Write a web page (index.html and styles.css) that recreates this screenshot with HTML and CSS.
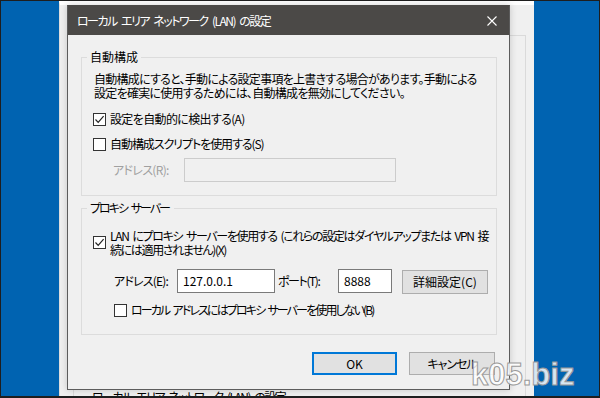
FILE: index.html
```html
<!DOCTYPE html>
<html lang="ja">
<head>
  <meta charset="UTF-8" />
  <meta name="viewport" content="width=device-width, initial-scale=1.0" />
  <title>ローカル エリア ネットワーク (LAN) の設定</title>
  <link rel="stylesheet" href="styles.css">
</head>
<body>
  <div class="screen">
    <div class="backwin">
      <div class="backwin-panel">
        <div class="backwin-caption">ローカル エリア ネットワーク (LAN) の設定</div>
      </div>
    </div>

    <div class="dialog">
      <div class="titlebar">
        <span class="title">ローカル エリア ネットワーク (LAN) の設定</span>
        <svg class="close" width="10" height="10" viewBox="0 0 10 10"><path d="M0.5 0.5L9.5 9.5M9.5 0.5L0.5 9.5" stroke="#fff" stroke-width="1.1" fill="none"/></svg>
      </div>
      <div class="dialog-body">
        <fieldset class="group group-auto">
          <legend>自動構成</legend>
          <div class="group-body">
            <p class="desc">自動構成にすると、手動による設定事項を上書きする場合があります。手動による<br>設定を確実に使用するためには、自動構成を無効にしてください。</p>
            <div class="check row-detect"><span class="box"><svg width="11" height="11" viewBox="0 0 11 11"><path d="M1.5 5.5L4.2 8.3L9.6 2.2" stroke="#222" stroke-width="1.2" fill="none"/></svg></span><span>設定を自動的に検出する(A)</span></div>
            <div class="check row-script"><span class="box"></span><span>自動構成スクリプトを使用する(S)</span></div>
            <div class="field-row row-script-addr disabled">
              <span class="field-label label-r">アドレス(R):</span>
              <span class="input input-script"></span>
            </div>
          </div>
        </fieldset>

        <fieldset class="group group-proxy">
          <legend>プロキシ サーバー</legend>
          <div class="group-body">
            <div class="check check-multi row-use-proxy"><span class="box"><svg width="11" height="11" viewBox="0 0 11 11"><path d="M1.5 5.5L4.2 8.3L9.6 2.2" stroke="#222" stroke-width="1.2" fill="none"/></svg></span><span>LAN にプロキシ サーバーを使用する (これらの設定はダイヤルアップまたは VPN 接<br>続には適用されません)(X)</span></div>
            <div class="field-row row-proxy-addr">
              <span class="field-label label-e">アドレス(E):</span>
              <span class="input input-addr">127.0.0.1</span>
              <span class="field-label label-t">ポート(T):</span>
              <span class="input input-port">8888</span>
              <button class="btn btn-advanced">詳細設定(C)</button>
            </div>
            <div class="check row-bypass"><span class="box"></span><span>ローカル アドレスにはプロキシ サーバーを使用しない(B)</span></div>
          </div>
        </fieldset>

        <div class="button-row">
          <button class="btn btn-ok">OK</button>
          <button class="btn btn-cancel">キャンセル</button>
        </div>
      </div>
    </div>

    <div class="watermark">k05.biz</div>
  </div>
</body>
</html>
```

FILE: styles.css
```css
* { box-sizing: border-box; }
body { margin: 0; background: #1e1e1e; font-family: "Noto Sans CJK JP", "Noto Sans", sans-serif; font-size: 12px; color: #000; font-feature-settings: "palt"; }
.screen { position: relative; width: 600px; height: 398px; border: 1px solid #1e1e1e; border-bottom-width: 2px; background: #0063b1; overflow: hidden; }

/* window behind the dialog */
.backwin { position: absolute; left: 58px; top: 0; width: 475px; height: 395px; background: #f0f0f0; border-top: 4px solid #fff; border-left: 1px solid #dcdcdc; padding: 30px 8px 0 13px; }
.backwin-panel { height: 100%; border: 1px solid #dadada; border-bottom: none; padding-left: 18px; }
.backwin-caption { margin-top: 353px; line-height: 16px; white-space: nowrap; letter-spacing: -1.5px; word-spacing: 3px; }

/* dialog */
.dialog { position: absolute; left: 66px; top: 4px; width: 443px; height: 385px; background: #f0f0f0; border: 1px solid #5c5c5c; border-top-color: #4b4947; box-shadow: 0 0 7px rgba(0,0,0,0.18); }
.titlebar { height: 29px; background: #4b4947; color: #fff; display: flex; align-items: center; justify-content: space-between; padding: 0 12px 0 9px; }
.title { line-height: 16px; white-space: nowrap; letter-spacing: -1.5px; word-spacing: 3px; }
.dialog-body { padding: 14px 12px 0 13px; }

.group { margin: 0; padding: 0; border: 1px solid #dcdcdc; min-width: 0; }
.group legend { margin-left: 5px; padding: 0 3px; line-height: 16px; }
.group-auto { height: 147px; }
.group-proxy { height: 135px; margin-top: 4px; }
.group-proxy legend { letter-spacing: -2px; word-spacing: 3px; padding-right: 5px; }
.group-body { padding-left: 11px; }

.desc { margin: 7px 0 0 1px; line-height: 13.5px; white-space: nowrap; letter-spacing: -0.73px; }

.check { display: flex; align-items: center; gap: 4px; line-height: 16px; white-space: nowrap; }
.box { width: 13px; height: 13px; border: 1px solid #333; background: #fff; display: flex; align-items: center; justify-content: center; flex-shrink: 0; }
.row-detect { margin-top: 12px; letter-spacing: -0.64px; }
.row-script { margin-top: 9px; letter-spacing: -1.06px; }
.check-multi { line-height: 13.5px; }
.row-use-proxy { margin-top: 13px; letter-spacing: -1.35px; word-spacing: 2.5px; }
.row-bypass { margin-top: 9px; padding-left: 21px; letter-spacing: -1.9px; word-spacing: 2.5px; }

.field-row { display: flex; align-items: center; white-space: nowrap; }
.row-script-addr { margin-top: 6px; padding-left: 20px; }
.row-proxy-addr { margin-top: 13px; padding-left: 21px; height: 24px; }
.field-label { line-height: 16px; }
.label-r { width: 71px; letter-spacing: -0.67px; }
.label-e { width: 63px; letter-spacing: -0.8px; }
.label-t { width: 60px; margin-left: 3px; letter-spacing: -1.4px; }
.disabled .field-label { color: #a0a0a0; }

.input { display: block; height: 24px; border: 1px solid #7a7a7a; background: #fff; padding: 0 5px; line-height: 22px; }
.input-script { width: 212px; border-color: #cccccc; background: #f0f0f0; }
.input-addr { width: 98px; }
.input-port { width: 54px; }

.btn { font-family: inherit; font-size: 12px; font-feature-settings: "palt"; color: #000; background: #e1e1e1; border: 1px solid #adadad; padding: 0; line-height: 16px; }
.btn-advanced { width: 86px; height: 24px; margin-left: 10px; align-self: flex-end; margin-bottom: -1px; }
.button-row { display: flex; justify-content: flex-end; gap: 12px; margin-top: 17px; padding-right: 2px; }
.btn-ok { width: 85px; height: 23px; border: 2px solid #0078d7; }
.btn-cancel { width: 86px; height: 23px; letter-spacing: -1px; }

.watermark { position: absolute; left: 470px; top: 356px; font-family: "Liberation Sans", sans-serif; font-weight: bold; font-size: 31px; color: rgba(255,255,255,0.85); -webkit-text-stroke: 1px #999; letter-spacing: 0; line-height: 36px; }
```
